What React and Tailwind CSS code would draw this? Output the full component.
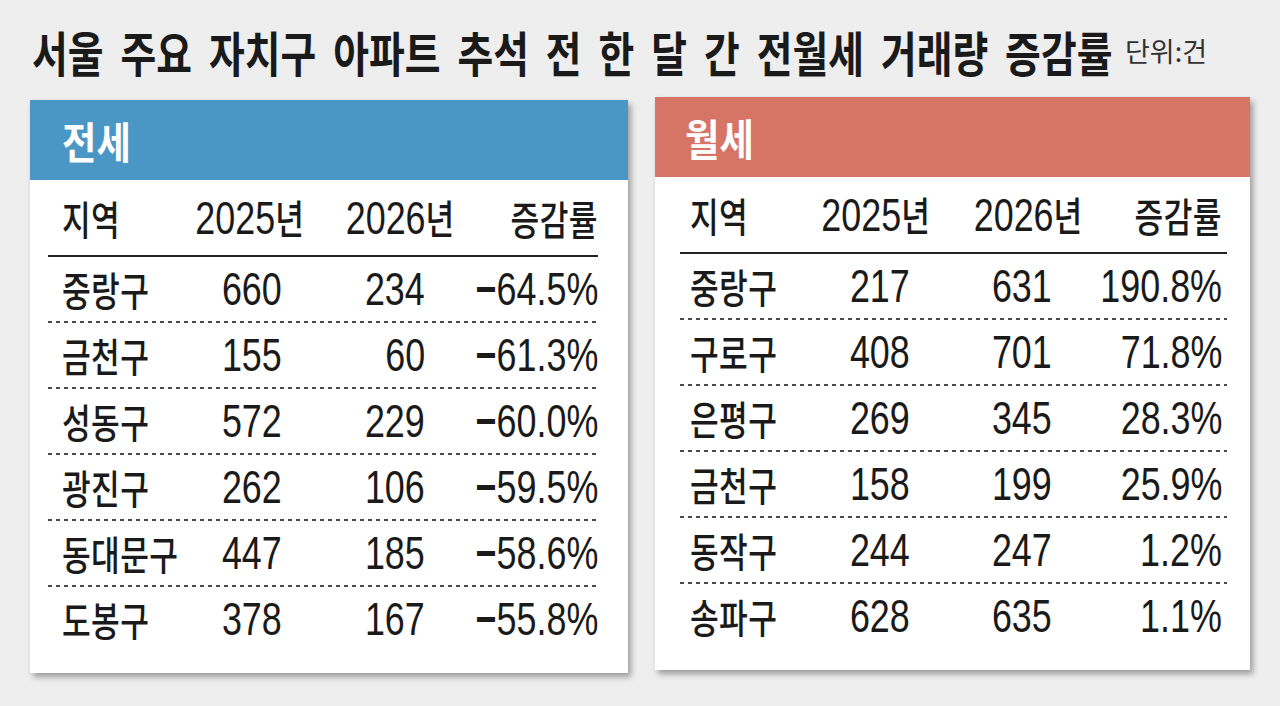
import React from "react";

const SPLIT = /([\uAC00-\uD7A3]+|−)/;
const HANGUL = /^[\uAC00-\uD7A3]+$/;

function Txt({ s, origin }) {
  const parts = s.split(SPLIT).filter(Boolean);
  return (
    <span className={"inline-block whitespace-nowrap leading-none scale-x-[0.78] " + origin}>
      {parts.map((p, i) =>
        HANGUL.test(p) ? (
          <span key={i} className="font-['Noto_Sans_CJK_KR',sans-serif] font-medium text-[40px] tracking-[0.5px] leading-none">
            {p}
          </span>
        ) : p === "−" ? (
          <span key={i} className="font-['Liberation_Sans',sans-serif] font-bold text-[46px] leading-none">
            {p}
          </span>
        ) : (
          <span key={i} className="font-['Liberation_Sans',sans-serif] text-[46px] leading-none">
            {p}
          </span>
        )
      )}
    </span>
  );
}

function Dotted() {
  return (
    <div className="h-[2px] bg-[linear-gradient(to_right,#4a4a4a_55%,transparent_55%)] bg-[length:8px_2px] bg-repeat-x" />
  );
}

function Panel({ title, headerBg, wrap, pad, cols, namePad, c2pr, c3pr, c4pr, rows }) {
  return (
    <div className={"bg-white shadow-[3px_4px_6px_rgba(0,0,0,0.35)] " + wrap}>
      <div className={"h-[80px] flex items-center " + headerBg}>
        <span className="inline-block origin-left scale-x-[0.87] whitespace-nowrap font-['Noto_Sans_CJK_KR',sans-serif] font-bold text-[43px] leading-none text-white">
          {title}
        </span>
      </div>
      <div className={pad}>
        <div className={"grid h-[75px] items-center text-[#1a1a1a] " + cols}>
          <div className={"flex justify-start " + namePad}>
            <Txt s="지역" origin="origin-left" />
          </div>
          <div className="flex justify-center">
            <Txt s="2025년" origin="origin-center" />
          </div>
          <div className="flex justify-end">
            <Txt s="2026년" origin="origin-right" />
          </div>
          <div className={"flex justify-end " + c4pr}>
            <Txt s="증감률" origin="origin-right" />
          </div>
        </div>
        <div className="h-[2px] bg-[#222]" />
        {rows.map((r, i) => (
          <div key={i}>
            {i > 0 && <Dotted />}
            <div className={"grid h-[64px] items-center text-[#1a1a1a] " + cols}>
              <div className={"flex justify-start " + namePad}>
                <Txt s={r[0]} origin="origin-left" />
              </div>
              <div className={"flex justify-end " + c2pr}>
                <Txt s={r[1]} origin="origin-right" />
              </div>
              <div className={"flex justify-end " + c3pr}>
                <Txt s={r[2]} origin="origin-right" />
              </div>
              <div className={"flex justify-end " + c4pr}>
                <Txt s={r[3]} origin="origin-right" />
              </div>
            </div>
          </div>
        ))}
      </div>
    </div>
  );
}

const LEFT = [
  ["중랑구", "660", "234", "−64.5%"],
  ["금천구", "155", "60", "−61.3%"],
  ["성동구", "572", "229", "−60.0%"],
  ["광진구", "262", "106", "−59.5%"],
  ["동대문구", "447", "185", "−58.6%"],
  ["도봉구", "378", "167", "−55.8%"],
];

const RIGHT = [
  ["중랑구", "217", "631", "190.8%"],
  ["구로구", "408", "701", "71.8%"],
  ["은평구", "269", "345", "28.3%"],
  ["금천구", "158", "199", "25.9%"],
  ["동작구", "244", "247", "1.2%"],
  ["송파구", "628", "635", "1.1%"],
];

export default function App() {
  return (
    <div className="w-[1280px] h-[706px] overflow-hidden bg-[#eeeeee]">
      <div className="flex items-start pt-[27px] pl-[32px] h-[97px]">
        <div className="w-[1093px] shrink-0">
          <span className="inline-block origin-left scale-x-[0.81] whitespace-nowrap [word-spacing:10px] font-['Noto_Sans_CJK_KR',sans-serif] font-bold text-[48px] leading-none text-[#1a1a1a]">
            서울 주요 자치구 아파트 추석 전 한 달 간 전월세 거래량 증감률
          </span>
        </div>
        <span className="mt-[10px] inline-block origin-left scale-x-[1] whitespace-nowrap font-['Noto_Sans_CJK_KR',sans-serif] text-[27px] leading-none text-[#333]">
          단위:건
        </span>
      </div>
      <div className="flex items-start pl-[30px] gap-[27px]">
        <Panel
          title="전세"
          headerBg="bg-[#4a96c5] pl-[32px]"
          wrap="w-[598px] h-[573px] mt-[3px]"
          pad="pl-[18px] pr-[30px]"
          cols="grid-cols-[147px_110px_150px_143px]"
          namePad="pl-[14px]"
          c2pr="pr-[23px]"
          c3pr="pr-[30px]"
          c4pr="pr-0"
          rows={LEFT}
        />
        <Panel
          title="월세"
          headerBg="bg-[#d67565] pl-[30px]"
          wrap="w-[595px] h-[573px]"
          pad="pl-[25px] pr-[23px]"
          cols="grid-cols-[140px_112px_151px_144px]"
          namePad="pl-[10px]"
          c2pr="pr-[22px]"
          c3pr="pr-[31px]"
          c4pr="pr-[5px]"
          rows={RIGHT}
        />
      </div>
    </div>
  );
}
